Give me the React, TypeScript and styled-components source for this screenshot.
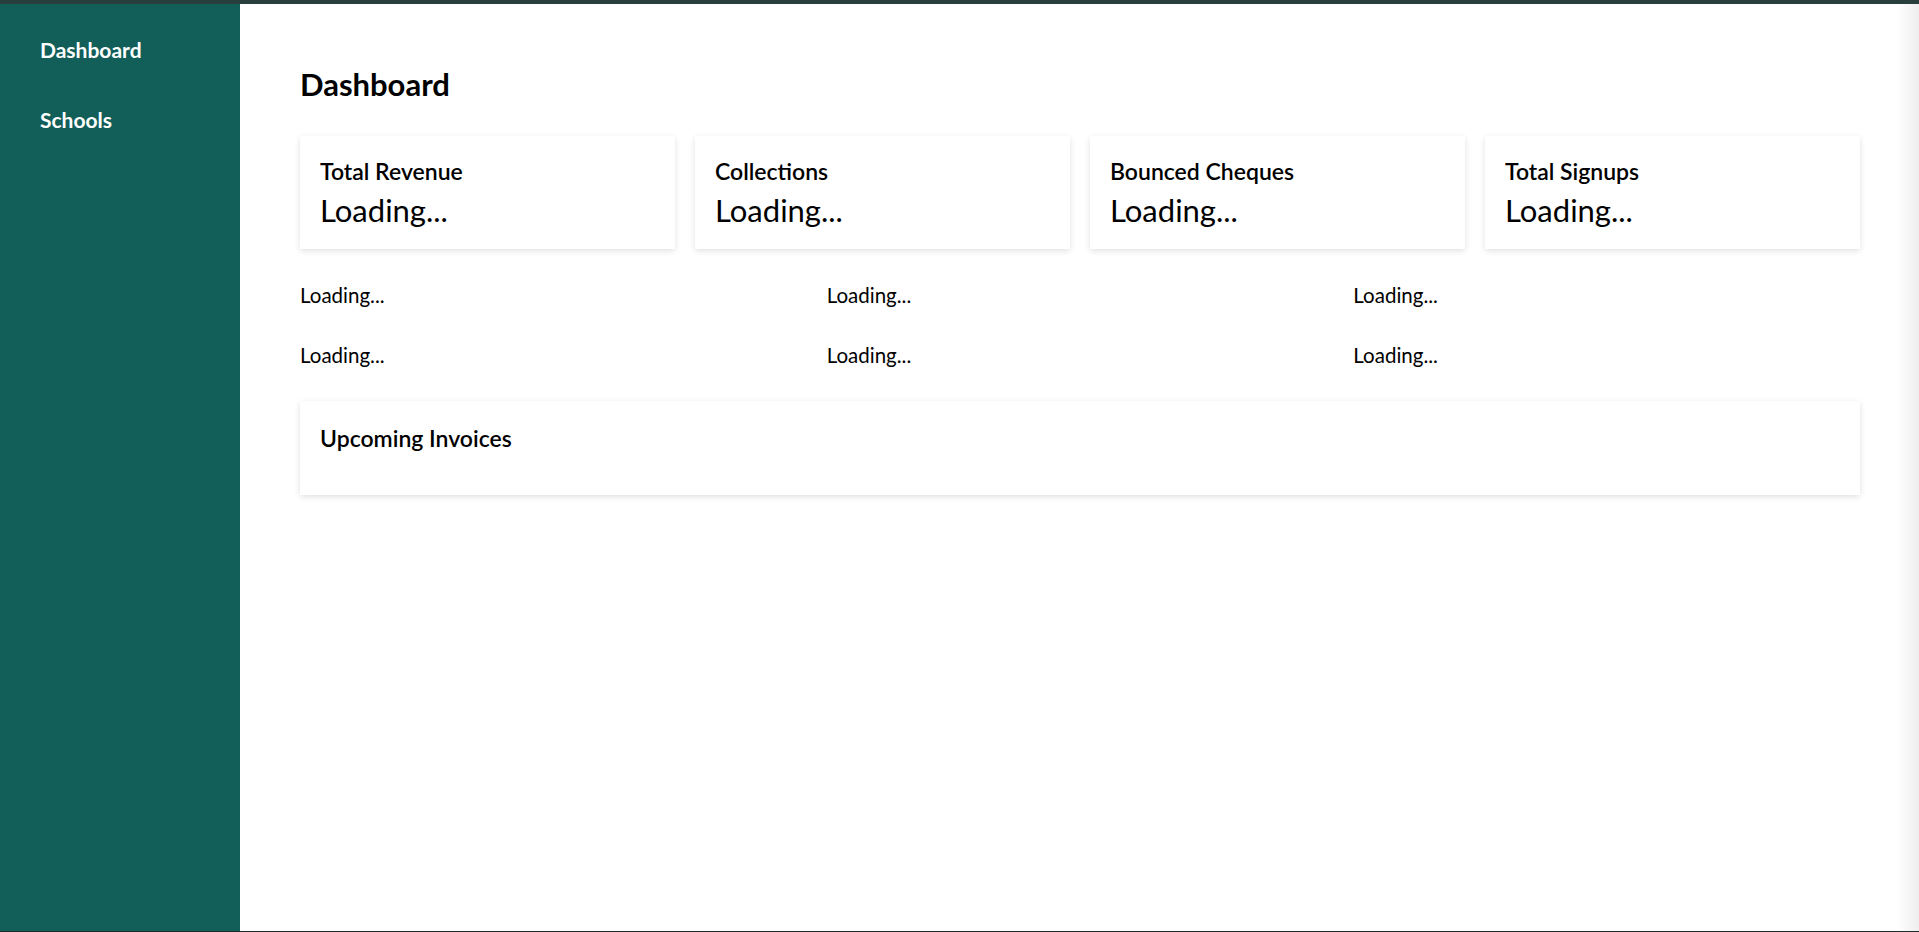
import React from "react";
import styled, { createGlobalStyle } from "styled-components";

const GlobalStyle = createGlobalStyle`
  html, body {
    margin: 0;
    padding: 0;
    height: 100%;
    background: #ffffff;
    font-family: "Lato", "Open Sans", "Noto Sans", sans-serif;
    color: #000;
  }
  #root { height: 100%; }
  * { box-sizing: border-box; }
`;

const Shell = styled.div`
  display: flex;
  height: 100vh;
  border-top: 4px solid #283f3e;
  border-bottom: 1px solid #1d2a2a;
  overflow: hidden;
`;

const Sidebar = styled.nav`
  width: 240px;
  flex-shrink: 0;
  background: #125e58;
  padding: 33px 0 0 40px;
  display: flex;
  flex-direction: column;
  gap: 45px;
`;

const NavLink = styled.a`
  color: #ffffff;
  font-size: 21px;
  line-height: 25px;
  font-weight: 700;
  text-decoration: none;
  cursor: pointer;
`;

const Main = styled.main`
  flex: 1;
  padding: 62px 59px 0 60px;
  background: linear-gradient(to right, #ffffff calc(100% - 22px), #eeeeee);
`;

const Title = styled.h1`
  margin: 0 0 33px;
  font-size: 31px;
  line-height: 37px;
  font-weight: 700;
`;

const CardGrid = styled.div`
  display: grid;
  grid-template-columns: repeat(4, 1fr);
  gap: 20px;
`;

const Card = styled.div<{ $pad?: string }>`
  background: #ffffff;
  box-shadow: 0 2px 6px rgba(0, 0, 0, 0.12);
  padding: ${(p) => p.$pad ?? "22px 20px 20px"};
  display: flex;
  flex-direction: column;
`;

const CardTitle = styled.h3`
  margin: 0;
  font-size: 23px;
  line-height: 27px;
  font-weight: 600;
`;

const CardValue = styled.div`
  margin-top: 7px;
  font-size: 31px;
  line-height: 37px;
  font-weight: 400;
`;

const ChartGrid = styled.div`
  display: grid;
  grid-template-columns: repeat(3, 1fr);
  column-gap: 20px;
  row-gap: 35px;
  margin: 34px 0 33px;
`;

const ChartCell = styled.div`
  font-size: 20.5px;
  line-height: 25px;
`;

const metrics = ["Total Revenue", "Collections", "Bounced Cheques", "Total Signups"];

export default function App() {
  return (
    <>
      <GlobalStyle />
      <Shell>
        <Sidebar>
          <NavLink>Dashboard</NavLink>
          <NavLink>Schools</NavLink>
        </Sidebar>
        <Main>
          <Title>Dashboard</Title>
          <CardGrid>
            {metrics.map((m) => (
              <Card key={m}>
                <CardTitle>{m}</CardTitle>
                <CardValue>Loading...</CardValue>
              </Card>
            ))}
          </CardGrid>
          <ChartGrid>
            {Array.from({ length: 6 }).map((_, i) => (
              <ChartCell key={i}>Loading...</ChartCell>
            ))}
          </ChartGrid>
          <Card $pad="24px 20px 43px">
            <CardTitle>Upcoming Invoices</CardTitle>
          </Card>
        </Main>
      </Shell>
    </>
  );
}
